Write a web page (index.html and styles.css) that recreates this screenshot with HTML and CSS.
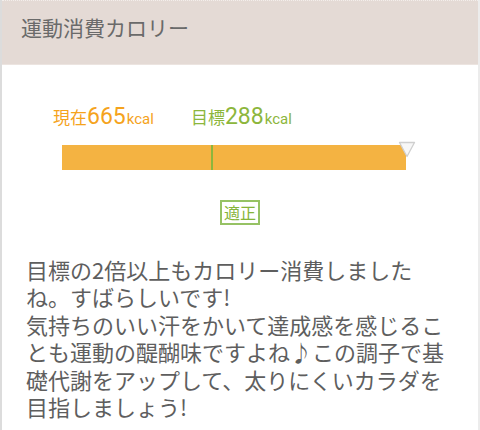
FILE: index.html
```html
<!DOCTYPE html>
<html lang="ja">
<head>
<meta charset="utf-8">
<link rel="stylesheet" href="styles.css">
</head>
<body>
<div class="card">
  <div class="header">運動消費カロリー</div>
  <div class="meter">
    <div class="labels">
      <div class="label current"><span class="jp">現在</span><span class="num">665</span><span class="unit">kcal</span></div>
      <div class="label target"><span class="jp">目標</span><span class="num">288</span><span class="unit">kcal</span></div>
    </div>
    <div class="bar">
      <div class="marker" style="left: 43.3%"></div>
      <svg class="pointer" width="18" height="17" viewBox="0 0 18 17"><path d="M1.5 1.5 H16.5 L9 15.5 Z" fill="#f7f7f7" stroke="#cfcfcf" stroke-width="1.3" stroke-linejoin="round"/></svg>
    </div>
    <div class="badge-row"><span class="badge">適正</span></div>
  </div>
  <p class="message">目標の2倍以上もカロリー消費しましたね。すばらしいです!<br>気持ちのいい汗をかいて達成感を感じることも運動の醍醐味ですよね♪この調子で基礎代謝をアップして、太りにくいカラダを目指しましょう!</p>
</div>
</body>
</html>
```

FILE: styles.css
```css
* { box-sizing: border-box; }
html, body { margin: 0; padding: 0; background: #fff; }
body {
  width: 480px;
  height: 430px;
  overflow: hidden;
  font-family: Roboto, "Noto Sans CJK JP", sans-serif;
}
.card {
  height: 430px;
  border-left: 2px solid #dcdcdc;
  border-right: 2px solid #ececec;
}
.header {
  height: 65px;
  background: #e4dad5;
  border-top: 1px dotted #f3eeeb;
  border-bottom: 1px solid #ece4e0;
  display: flex;
  align-items: center;
  padding-left: 19px;
  padding-bottom: 11px;
  font-size: 21px;
  color: #6a6a6a;
  font-family: "Noto Sans CJK JP", sans-serif;
}
.meter {
  padding-top: 38px;
}
.labels {
  display: flex;
  align-items: baseline;
  padding-left: 51px;
  height: 28px;
}
.label { display: flex; align-items: baseline; }
.label .jp { font-size: 17px; font-family: "Noto Sans CJK JP", sans-serif; }
.label .num { font-size: 23px; }
.label .unit { font-size: 15px; margin-left: 1px; }
.current { color: #f5a31c; }
.target { color: #8cb63c; margin-left: 37px; }
.bar {
  position: relative;
  margin-top: 14px;
  margin-left: 60px;
  width: 344px;
  height: 25px;
  background: #f4b342;
}
.marker {
  position: absolute;
  top: 0;
  width: 2px;
  height: 25px;
  background: #8cb63c;
}
.pointer {
  position: absolute;
  right: -10px;
  top: -4px;
}
.badge-row {
  display: flex;
  justify-content: center;
  margin-top: 30px;
}
.badge {
  border: 2px solid #96c264;
  color: #86b43a;
  font-size: 16px;
  line-height: 21px;
  padding: 0 2px;
  font-family: "Noto Sans CJK JP", sans-serif;
}
.message {
  margin: 31px 0 0 0;
  padding: 0 32px 0 24px;
  font-size: 22px;
  line-height: 27.4px;
  color: #5e5e5e;
  font-family: "Noto Sans CJK JP", sans-serif;
  line-break: strict;
}
```
